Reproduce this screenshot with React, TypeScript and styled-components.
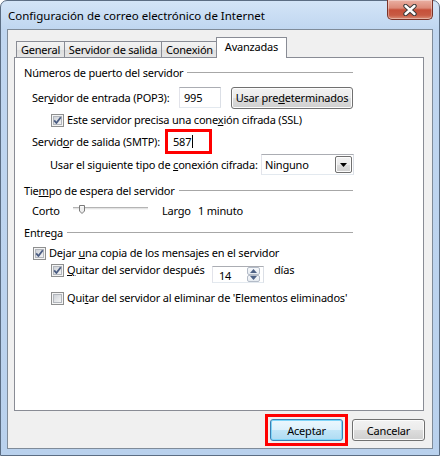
import React from 'react';
import styled, { createGlobalStyle, css } from 'styled-components';

const GlobalStyle = createGlobalStyle`
  html, body {
    margin: 0;
    padding: 0;
    background: #ffffff;
  }
  body {
    font-family: 'Noto Sans', 'DejaVu Sans', sans-serif;
    font-size: 11px;
    letter-spacing: -0.2px;
    color: #000;
  }
  * {
    box-sizing: border-box;
  }
`;

const Window = styled.div`
  width: 440px;
  height: 456px;
  display: flex;
  flex-direction: column;
  padding: 0 6px 6px;
  border: 1px solid #5b6d83;
  border-radius: 7px 7px 0 0;
  background: linear-gradient(180deg, #d3e4f7 0px, #c0d6f0 28px, #b9d1ed 100%);
`;

const TitleBar = styled.div`
  height: 28px;
  flex: none;
  display: flex;
  align-items: center;
  justify-content: space-between;
  padding-left: 1px;
`;

const Title = styled.span`
  font-size: 11.5px;
  letter-spacing: 0;
  color: #000;
`;

const CloseButton = styled.div`
  align-self: flex-start;
  margin-top: -1px;
  width: 46px;
  height: 20px;
  display: flex;
  align-items: center;
  justify-content: center;
  border: 1px solid #7a3328;
  border-top: none;
  border-radius: 0 0 5px 5px;
  background: linear-gradient(180deg, #eab0a3 0%, #dc8a78 42%, #c6503a 52%, #c85b44 80%, #da8e77 100%);
  box-shadow: inset 0 0 0 1px rgba(255, 255, 255, 0.35);
`;

const Client = styled.div`
  flex: 1;
  display: flex;
  flex-direction: column;
  padding-top: 7px;
  background: #f0f0f0;
  border: 1px solid #7f8b99;
`;

const TabStrip = styled.div`
  position: relative;
  z-index: 1;
  display: flex;
  align-items: flex-end;
  height: 21px;
  margin-left: 8px;
`;

const Tab = styled.div<{ $w: number; $active?: boolean }>`
  width: ${(p) => p.$w}px;
  height: 16px;
  margin-bottom: 1px;
  display: flex;
  align-items: center;
  justify-content: center;
  border: 1px solid #898c95;
  border-bottom: none;
  background: linear-gradient(180deg, #f3f3f3 0%, #ebebeb 50%, #dddddd 51%, #e6e6e6 100%);
  & + & {
    border-left: none;
  }
  ${(p) =>
    p.$active &&
    css`
      height: 21px;
      margin: 0 -2px 0 -2px;
      width: ${p.$w + 4}px;
      background: #ffffff;
      border-left: 1px solid #898c95 !important;
      padding-bottom: 3px;
    `}
`;

const Panel = styled.div`
  margin: -1px 8px 0 6px;
  height: 354px;
  flex: none;
  display: flex;
  flex-direction: column;
  padding: 6px 0 0 9px;
  background: #ffffff;
  border: 1px solid #898c95;
`;

const GroupTitle = styled.div<{ $top?: number }>`
  width: 329px;
  height: 16px;
  margin-top: ${(p) => p.$top ?? 0}px;
  display: flex;
  align-items: center;
  gap: 4px;
  white-space: nowrap;
  &::after {
    content: '';
    flex: 1;
    height: 1px;
    background: #a7a7a7;
  }
`;

const Row = styled.div<{ $top: number; $indent: number; $h?: number; $start?: boolean }>`
  display: flex;
  align-items: ${(p) => (p.$start ? 'flex-start' : 'center')};
  height: ${(p) => p.$h ?? 16}px;
  margin-top: ${(p) => p.$top}px;
  margin-left: ${(p) => p.$indent}px;
  white-space: nowrap;
`;

const Label = styled.span<{ $w?: number; $ml?: number }>`
  display: inline-block;
  width: ${(p) => (p.$w ? `${p.$w}px` : 'auto')};
  margin-left: ${(p) => p.$ml ?? 0}px;
  flex: none;
  line-height: 16px;
`;

const Key = styled.span`
  text-decoration: underline;
`;

const CheckLine = styled.div<{ $w?: number }>`
  display: flex;
  align-items: center;
  gap: 3px;
  height: 16px;
  width: ${(p) => (p.$w ? `${p.$w}px` : 'auto')};
  flex: none;
`;

/* red annotation frame drawn over a control, as in the screenshot */
const marked = (offset: number) => css`
  position: relative;
  &::after {
    content: '';
    position: absolute;
    inset: -${offset + 3}px;
    border: 3px solid #ff0000;
    pointer-events: none;
  }
`;

const TextBox = styled.div<{ $w: number; $pad: number; $marked?: boolean }>`
  width: ${(p) => p.$w}px;
  height: 21px;
  flex: none;
  display: flex;
  align-items: center;
  padding-left: ${(p) => p.$pad}px;
  background: #ffffff;
  border: 1px solid;
  border-color: #abadb3 #dbdfe6 #e3e9ef #e2e3ea;
  ${(p) => p.$marked && marked(0)}
`;

const Caret = styled.span`
  display: inline-block;
  width: 1px;
  height: 13px;
  margin-left: 1px;
  background: #000;
`;

const PushButton = styled.button<{ $w: number; $default?: boolean; $marked?: boolean; $ml?: number }>`
  width: ${(p) => p.$w}px;
  height: 22px;
  flex: none;
  margin-left: ${(p) => p.$ml ?? 0}px;
  padding: 0;
  font: inherit;
  letter-spacing: inherit;
  color: #000;
  border: 1px solid #707070;
  border-radius: 3px;
  background: linear-gradient(180deg, #f2f2f2 0%, #ebebeb 50%, #dddddd 51%, #cfcfcf 100%);
  box-shadow: inset 0 0 0 1px #fcfcfc;
  ${(p) =>
    p.$default &&
    css`
      border-color: #3c7fb1;
      background: linear-gradient(180deg, #ecf7fd 0%, #dcf1fc 50%, #c2e6f8 51%, #aedbf3 100%);
      box-shadow: inset 0 0 0 1px #7fd5f8;
    `}
  ${(p) => p.$marked && marked(3)}
`;

const Select = styled.div`
  width: 93px;
  height: 21px;
  flex: none;
  display: flex;
  align-items: center;
  justify-content: space-between;
  padding: 1px 1px 1px 3px;
  background: #ffffff;
  border: 1px solid;
  border-color: #abadb3 #dbdfe6 #e3e9ef #e2e3ea;
`;

const DropButton = styled.div`
  width: 17px;
  height: 17px;
  display: flex;
  align-items: center;
  justify-content: center;
  border: 1px solid #707070;
  border-radius: 2px;
  background: linear-gradient(180deg, #f2f2f2 0%, #ebebeb 50%, #dddddd 51%, #cfcfcf 100%);
  box-shadow: inset 0 0 0 1px #fcfcfc;
`;

const Spinner = styled.div`
  width: 52px;
  height: 17px;
  flex: none;
  margin-top: 4px;
  display: flex;
  align-items: center;
  justify-content: space-between;
  padding: 0 3px 0 6px;
  background: #ffffff;
  border: 1px solid;
  border-color: #abadb3 #dbdfe6 #e3e9ef #e2e3ea;
`;

const SpinValue = styled.span`
  line-height: 14px;
  padding-top: 3px;
`;

const SpinArrows = styled.div`
  width: 13px;
  height: 15px;
  display: flex;
  flex-direction: column;
`;

const SpinArrow = styled.div`
  flex: 1;
  display: flex;
  align-items: center;
  justify-content: center;
  border: 1px solid #b4bcc8;
  border-radius: 2px;
  background: linear-gradient(180deg, #f6f8fb 0%, #e6ebf1 100%);
`;

const ButtonRow = styled.div`
  display: flex;
  justify-content: flex-end;
  gap: 9px;
  margin: 8px 7px 0 0;
`;

function CheckBox({ checked }: { checked?: boolean }) {
  return (
    <svg width="13" height="13" viewBox="0 0 13 13" style={{ flex: 'none' }}>
      <defs>
        <linearGradient id="cbFill" x1="0" y1="0" x2="1" y2="1">
          <stop offset="0" stopColor="#cbcfd5" />
          <stop offset="1" stopColor="#f6f6f6" />
        </linearGradient>
      </defs>
      <rect x="0.5" y="0.5" width="12" height="12" fill="#f4f4f4" stroke="#8e8f8f" />
      <rect x="2.5" y="2.5" width="8" height="8" fill="url(#cbFill)" stroke="#b2b6bc" />
      {checked && (
        <path d="M3.2 6.4 L5.4 9 L9.8 3.2" fill="none" stroke="#4a5c82" strokeWidth="1.8" strokeLinejoin="round" />
      )}
    </svg>
  );
}

function Slider() {
  return (
    <svg width="75" height="16" viewBox="0 0 75 16" style={{ flex: 'none' }}>
      <rect x="0" y="4" width="75" height="1" fill="#b4b4b4" />
      <rect x="0" y="5" width="75" height="1" fill="#e4e4e4" />
      <rect x="0" y="6" width="75" height="1" fill="#f6f6f6" />
      <path d="M6.5 2.5 H11.5 V8 L9 10.5 L6.5 8 Z" fill="#eeeeee" stroke="#7a7a7a" />
      <path d="M7.5 3.5 H10.5" stroke="#ffffff" />
    </svg>
  );
}

function Arrow({ up, color = '#000' }: { up?: boolean; color?: string }) {
  return (
    <svg width="7" height="4" viewBox="0 0 7 4">
      <path d={up ? 'M0 4 L3.5 0 L7 4 Z' : 'M0 0 L7 0 L3.5 4 Z'} fill={color} />
    </svg>
  );
}

function CloseGlyph() {
  return (
    <svg width="14" height="12" viewBox="0 0 14 12">
      <path d="M2.5 2 L11.5 10 M11.5 2 L2.5 10" stroke="#3a3a3a" strokeWidth="4.4" strokeLinecap="round" />
      <path d="M2.5 2 L11.5 10 M11.5 2 L2.5 10" stroke="#ffffff" strokeWidth="2.4" strokeLinecap="round" />
    </svg>
  );
}

export default function App() {
  return (
    <>
      <GlobalStyle />
      <Window>
        <TitleBar>
          <Title>Configuración de correo electrónico de Internet</Title>
          <CloseButton>
            <CloseGlyph />
          </CloseButton>
        </TitleBar>
        <Client>
          <TabStrip>
            <Tab $w={49}>General</Tab>
            <Tab $w={97}>Servidor de salida</Tab>
            <Tab $w={56}>Conexión</Tab>
            <Tab $w={67} $active>
              Avanzadas
            </Tab>
          </TabStrip>
          <Panel>
            <GroupTitle>Números de puerto del servidor</GroupTitle>
            <Row $top={7} $indent={8} $h={21}>
              <Label $w={147}>
                Ser<Key>v</Key>idor de entrada (POP3):
              </Label>
              <TextBox $w={42} $pad={4}>
                995
              </TextBox>
              <PushButton $w={122} $ml={10}>
                Usar pre<Key>d</Key>eterminados
              </PushButton>
            </Row>
            <Row $top={4} $indent={27}>
              <CheckLine>
                <CheckBox checked />
                <Label>
                  Este servidor precisa una cone<Key>x</Key>ión cifrada (SSL)
                </Label>
              </CheckLine>
            </Row>
            <Row $top={3} $indent={8} $h={21}>
              <Label $w={135}>
                Servid<Key>o</Key>r de salida (SMTP):
              </Label>
              <TextBox $w={43} $pad={5} $marked>
                587
                <Caret />
              </TextBox>
            </Row>
            <Row $top={2} $indent={26} $h={21}>
              <Label $w={211}>
                Usar el siguiente tipo de <Key>c</Key>onexión cifrada:
              </Label>
              <Select>
                <span>Ninguno</span>
                <DropButton>
                  <Arrow />
                </DropButton>
              </Select>
            </Row>
            <GroupTitle $top={7}>
              <span>
                Tie<Key>m</Key>po de espera del servidor
              </span>
            </GroupTitle>
            <Row $top={5} $indent={8}>
              <Label $w={41}>Corto</Label>
              <Slider />
              <Label $w={36} $ml={14}>
                Largo
              </Label>
              <Label>1 minuto</Label>
            </Row>
            <GroupTitle $top={5}>Entrega</GroupTitle>
            <Row $top={5} $indent={9}>
              <CheckLine>
                <CheckBox checked />
                <Label>
                  Dejar <Key>u</Key>na copia de los mensajes en el servidor
                </Label>
              </CheckLine>
            </Row>
            <Row $top={1} $indent={27} $h={22} $start>
              <CheckLine $w={161}>
                <CheckBox checked />
                <Label>
                  <Key>Q</Key>uitar del servidor después
                </Label>
              </CheckLine>
              <Spinner>
                <SpinValue>14</SpinValue>
                <SpinArrows>
                  <SpinArrow>
                    <Arrow up color="#4d6185" />
                  </SpinArrow>
                  <SpinArrow>
                    <Arrow color="#4d6185" />
                  </SpinArrow>
                </SpinArrows>
              </Spinner>
              <Label $ml={10}>días</Label>
            </Row>
            <Row $top={6} $indent={27}>
              <CheckLine>
                <CheckBox />
                <Label>
                  Qui<Key>t</Key>ar del servidor al eliminar de 'Elementos eliminados'
                </Label>
              </CheckLine>
            </Row>
          </Panel>
          <ButtonRow>
            <PushButton $w={73} $default $marked>
              Aceptar
            </PushButton>
            <PushButton $w={73}>Cancelar</PushButton>
          </ButtonRow>
        </Client>
      </Window>
    </>
  );
}
